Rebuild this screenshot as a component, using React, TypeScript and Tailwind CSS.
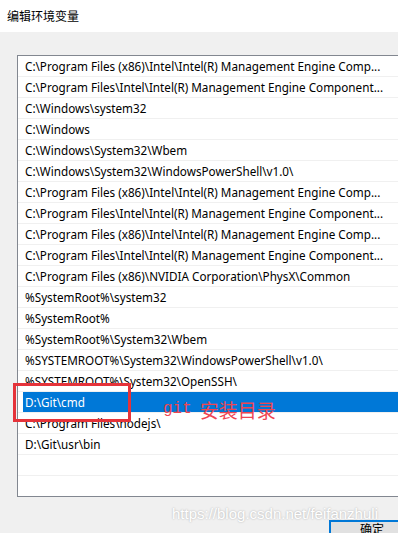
const rows = [
  'C:\\Program Files (x86)\\Intel\\Intel(R) Management Engine Comp...',
  'C:\\Program Files\\Intel\\Intel(R) Management Engine Component...',
  'C:\\Windows\\system32',
  'C:\\Windows',
  'C:\\Windows\\System32\\Wbem',
  'C:\\Windows\\System32\\WindowsPowerShell\\v1.0\\',
  'C:\\Program Files (x86)\\Intel\\Intel(R) Management Engine Comp...',
  'C:\\Program Files\\Intel\\Intel(R) Management Engine Component...',
  'C:\\Program Files (x86)\\Intel\\Intel(R) Management Engine Comp...',
  'C:\\Program Files\\Intel\\Intel(R) Management Engine Component...',
  'C:\\Program Files (x86)\\NVIDIA Corporation\\PhysX\\Common',
  '%SystemRoot%\\system32',
  '%SystemRoot%',
  '%SystemRoot%\\System32\\Wbem',
  '%SYSTEMROOT%\\System32\\WindowsPowerShell\\v1.0\\',
  '%SYSTEMROOT%\\System32\\OpenSSH\\',
  'D:\\Git\\cmd',
  'C:\\Program Files\\nodejs\\',
  'D:\\Git\\usr\\bin',
  '',
  '',
];

const SELECTED = 16;

export default function App() {
  return (
    <div
      className="relative w-[398px] h-[533px] overflow-hidden bg-[#f0f0f0] text-black"
      style={{ fontFamily: '"Noto Sans", "Noto Sans CJK SC", sans-serif' }}
    >
      <div className="h-[32px] bg-white flex items-center pl-[7px] text-[12px] font-['Noto_Sans_CJK_SC',sans-serif]">
        编辑环境变量
      </div>

      <div className="mt-[23px] ml-[17px] w-[420px] border border-[#828790] bg-white">
        {rows.map((r, i) => (
          <div key={i} className="h-[21px] border-b border-[#f0f0f0] pl-[5px] last:border-b-0 last:h-[20px]">
            <div
              className={`h-full flex items-center pl-[2px] pt-[2px] text-[11.7px] whitespace-nowrap overflow-hidden ${
                i === SELECTED ? 'bg-[#0078d7] text-white' : ''
              }`}
            >
              {r}
            </div>
          </div>
        ))}
      </div>

      <div className="pl-[329px] pt-[23px]">
        <button className="w-[86px] h-[26px] border-2 border-[#0078d7] bg-[#e1e1e1] text-[12px] font-['Noto_Sans_CJK_SC',sans-serif] flex justify-start pl-[29px] pt-[1px] leading-none">
          确定
        </button>
      </div>

      {/* annotation */}
      <div className="absolute left-[13px] top-[383px] w-[118px] h-[39px] border-[3px] border-[#e5333a]" />
      <div className="absolute left-[163px] top-[397px] flex items-center text-[#ee4652] whitespace-nowrap">
        <span className="font-['Liberation_Mono',monospace] text-[16px]">git</span>
        <span className="ml-[8px] text-[19px] font-['Noto_Sans_CJK_SC',sans-serif] leading-none">安装目录</span>
      </div>

      {/* watermark */}
      <div className="absolute left-[172px] top-[503px] text-[15px] text-white font-['Liberation_Sans',sans-serif] whitespace-nowrap [text-shadow:0_0_2px_rgba(0,0,0,0.3)]">
        https://blog.csdn.net/feifanzhuli
      </div>
    </div>
  );
}
